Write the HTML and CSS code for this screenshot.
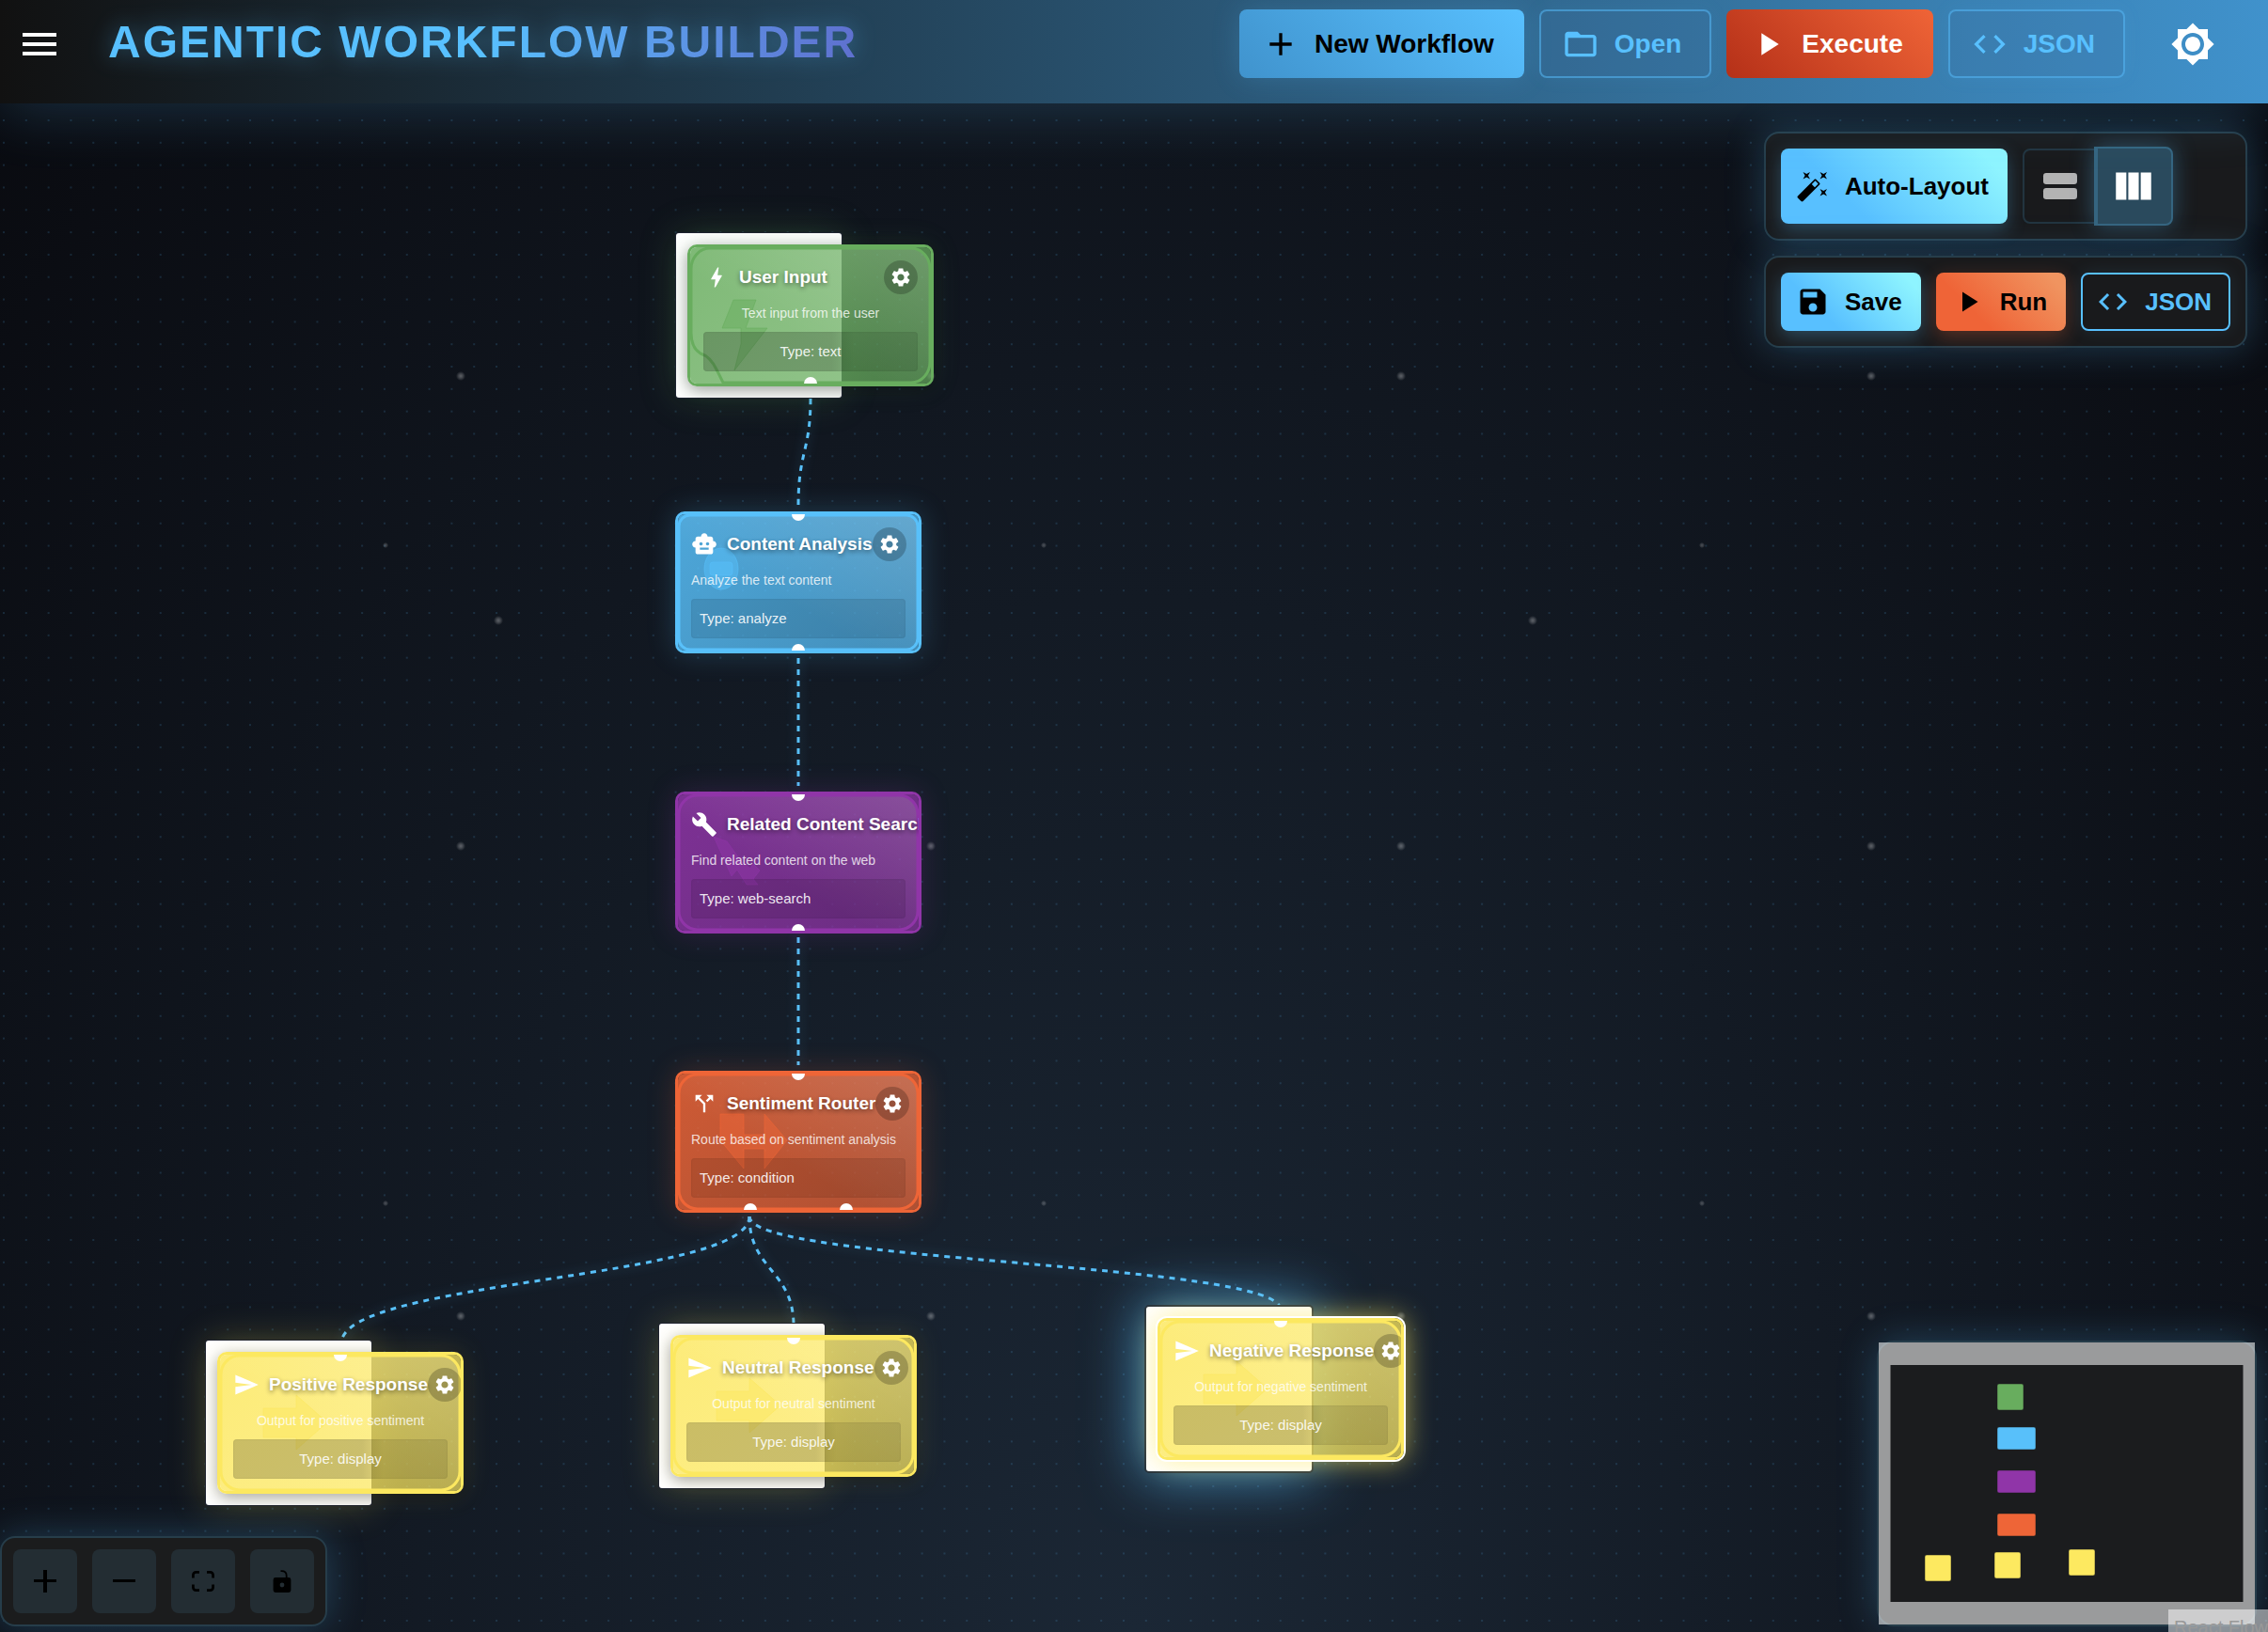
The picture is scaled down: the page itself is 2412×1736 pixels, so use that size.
FILE: index.html
```html
<!DOCTYPE html>
<html lang="en">
<head>
<meta charset="utf-8">
<title>Agentic Workflow Builder</title>
<link rel="stylesheet" href="styles.css">
</head>
<body>
<svg class="sprite" aria-hidden="true">
  <symbol id="i-menu" viewBox="0 0 24 24"><path d="M3 18h18v-2H3v2zm0-5h18v-2H3v2zm0-7v2h18V6H3z"/></symbol>
  <symbol id="i-add" viewBox="0 0 24 24"><path d="M19 13h-6v6h-2v-6H5v-2h6V5h2v6h6v2z"/></symbol>
  <symbol id="i-folder" viewBox="0 0 24 24"><path d="M20 6h-8l-2-2H4c-1.1 0-1.99.9-1.99 2L2 18c0 1.1.9 2 2 2h16c1.1 0 2-.9 2-2V8c0-1.1-.9-2-2-2zm0 12H4V8h16v10z"/></symbol>
  <symbol id="i-play" viewBox="0 0 24 24"><path d="M8 5v14l11-7z"/></symbol>
  <symbol id="i-code" viewBox="0 0 24 24"><path d="M9.4 16.6 4.8 12l4.6-4.6L8 6l-6 6 6 6 1.4-1.4zm5.2 0 4.6-4.6-4.6-4.6L16 6l6 6-6 6-1.4-1.4z"/></symbol>
  <symbol id="i-sun" viewBox="0 0 24 24"><path d="M20 8.69V4h-4.69L12 .69 8.69 4H4v4.69L.69 12 4 15.31V20h4.69L12 23.31 15.31 20H20v-4.69L23.31 12 20 8.69zM12 18c-3.31 0-6-2.69-6-6s2.69-6 6-6 6 2.69 6 6-2.69 6-6 6zm0-10c-2.21 0-4 1.79-4 4s1.79 4 4 4 4-1.79 4-4-1.79-4-4-4z"/></symbol>
  <symbol id="i-wand" viewBox="0 0 24 24"><path d="M7.5 5.6 10 7 8.6 4.5 10 2 7.5 3.4 5 2l1.4 2.5L5 7zm12 9.8L17 14l1.4 2.5L17 19l2.5-1.4L22 19l-1.4-2.5L22 14zM22 2l-2.5 1.4L17 2l1.4 2.5L17 7l2.5-1.4L22 7l-1.4-2.5zm-7.63 5.29c-.39-.39-1.02-.39-1.41 0L1.29 18.96c-.39.39-.39 1.02 0 1.41l2.34 2.34c.39.39 1.02.39 1.41 0L16.7 11.05c.39-.39.39-1.02 0-1.41l-2.33-2.35zm-1.03 5.49-2.12-2.12 2.44-2.44 2.12 2.12-2.44 2.44z"/></symbol>
  <symbol id="i-rows" viewBox="0 0 24 24"><rect x="3" y="5" width="18" height="6" rx="1.6"/><rect x="3" y="13" width="18" height="6" rx="1.6"/></symbol>
  <symbol id="i-columns" viewBox="0 0 24 24"><path d="M3 5h5.33v14H3zM9.33 5h5.33v14H9.33zM15.67 5H21v14h-5.33z"/></symbol>
  <symbol id="i-save" viewBox="0 0 24 24"><path d="M17 3H5c-1.11 0-2 .9-2 2v14c0 1.1.89 2 2 2h14c1.1 0 2-.9 2-2V7l-4-4zm-5 16c-1.66 0-3-1.34-3-3s1.34-3 3-3 3 1.34 3 3-1.34 3-3 3zm3-10H5V5h10v4z"/></symbol>
  <symbol id="i-bolt" viewBox="0 0 24 24"><path d="M11 21h-1l1-7H7.5c-.58 0-.57-.32-.38-.66.19-.34.05-.08.07-.12C8.48 10.94 10.42 7.54 13 3h1l-1 7h3.5c.49 0 .56.33.47.51l-.07.15C12.96 17.55 11 21 11 21z"/></symbol>
  <symbol id="i-robot" viewBox="0 0 24 24"><path d="M20 9V7c0-1.1-.9-2-2-2h-3c0-1.66-1.34-3-3-3S9 3.34 9 5H6c-1.1 0-2 .9-2 2v2c-1.66 0-3 1.34-3 3s1.34 3 3 3v4c0 1.1.9 2 2 2h12c1.1 0 2-.9 2-2v-4c1.66 0 3-1.34 3-3s-1.34-3-3-3zM7.5 11.5c0-.83.67-1.5 1.5-1.5s1.5.67 1.5 1.5S9.83 13 9 13s-1.5-.67-1.5-1.5zM16 17H8v-2h8v2zm-1-4c-.83 0-1.5-.67-1.5-1.5S14.17 10 15 10s1.5.67 1.5 1.5S15.83 13 15 13z"/></symbol>
  <symbol id="i-wrench" viewBox="0 0 24 24"><path d="m22.7 19-9.1-9.1c.9-2.3.4-5-1.5-6.9-2-2-5-2.4-7.4-1.3L9 6 6 9 1.6 4.7C.4 7.1.9 10.1 2.9 12.1c1.9 1.9 4.6 2.4 6.9 1.5l9.1 9.1c.4.4 1 .4 1.4 0l2.3-2.3c.5-.4.5-1.1.1-1.4z"/></symbol>
  <symbol id="i-split" viewBox="0 0 24 24"><path d="m14 4 2.29 2.29-2.88 2.88 1.42 1.42 2.88-2.88L20 10V4zm-4 0H4v6l2.29-2.29 4.71 4.7V20h2v-8.41l-5.29-5.3z"/></symbol>
  <symbol id="i-send" viewBox="0 0 24 24"><path d="M2.01 21 23 12 2.01 3 2 10l15 2-15 2z"/></symbol>
  <symbol id="i-gear" viewBox="0 0 24 24"><path d="M19.14 12.94c.04-.3.06-.61.06-.94 0-.32-.02-.64-.07-.94l2.03-1.58c.18-.14.23-.41.12-.61l-1.92-3.32c-.12-.22-.37-.29-.59-.22l-2.39.96c-.5-.38-1.03-.7-1.62-.94l-.36-2.54c-.04-.24-.24-.41-.48-.41h-3.84c-.24 0-.43.17-.47.41l-.36 2.54c-.59.24-1.13.57-1.62.94l-2.39-.96c-.22-.08-.47 0-.59.22L2.74 8.87c-.12.21-.08.47.12.61l2.03 1.58c-.05.3-.09.63-.09.94s.02.64.07.94l-2.03 1.58c-.18.14-.23.41-.12.61l1.92 3.32c.12.22.37.29.59.22l2.39-.96c.5.38 1.03.7 1.62.94l.36 2.54c.05.24.24.41.48.41h3.84c.24 0 .44-.17.47-.41l.36-2.54c.59-.24 1.13-.56 1.62-.94l2.39.96c.22.08.47 0 .59-.22l1.92-3.32c.12-.22.07-.47-.12-.61l-2.01-1.58zM12 15.6c-1.98 0-3.6-1.62-3.6-3.6s1.62-3.6 3.6-3.6 3.6 1.62 3.6 3.6-1.62 3.6-3.6 3.6z"/></symbol>
  <symbol id="i-zoom-in" viewBox="0 0 24 24"><path d="M10 0h4v10h10v3H14v11h-4V13H0v-3h10z"/></symbol>
  <symbol id="i-zoom-out" viewBox="0 0 24 24"><path d="M0 10h24v3H0z"/></symbol>
  <symbol id="i-fit" viewBox="0 0 24 24"><path fill="none" stroke="currentColor" stroke-width="2.8" d="M1.4 8.5V5.4a3 3 0 0 1 3-3H8M16 2.4h3.6a3 3 0 0 1 3 3v3.1M22.6 15.5v3.1a3 3 0 0 1-3 3H16M8 21.6H4.4a3 3 0 0 1-3-3v-3.1"/></symbol>
  <symbol id="i-lock" viewBox="0 0 24 24"><path fill-rule="evenodd" d="M5 8h14a2.4 2.4 0 0 1 2.4 2.4v11.2A2.4 2.4 0 0 1 19 24H5a2.4 2.4 0 0 1-2.4-2.4V10.4A2.4 2.4 0 0 1 5 8zm7 5.6a2.4 2.4 0 1 0 0 4.8 2.4 2.4 0 0 0 0-4.8z"/><path fill="none" stroke="currentColor" stroke-width="1.8" d="M10.5 1.2h1c3.2 0 5.2 2 5.2 5V8.5"/></symbol>
  <linearGradient id="sheen" x1="0" y1="1" x2="1" y2="0"><stop offset=".4" stop-color="#fff" stop-opacity="0"/><stop offset="1" stop-color="#fff" stop-opacity=".16"/></linearGradient>
</svg>

<header class="topbar">
  <button class="icon-btn" aria-label="Menu"><svg><use href="#i-menu"/></svg></button>
  <h1 class="brand">AGENTIC WORKFLOW BUILDER</h1>
  <nav class="actions">
    <button class="btn btn-new"><svg><use href="#i-add"/></svg>New Workflow</button>
    <button class="btn btn-ghost"><svg><use href="#i-folder"/></svg>Open</button>
    <button class="btn btn-exec"><svg><use href="#i-play"/></svg>Execute</button>
    <button class="btn btn-ghost"><svg><use href="#i-code"/></svg>JSON</button>
  </nav>
  <button class="icon-btn" aria-label="Toggle theme"><svg><use href="#i-sun"/></svg></button>
</header>

<main class="canvas">
  <svg class="layer" aria-hidden="true">
    <defs><pattern id="grid" x="3" y="17" width="23.82" height="23.82" patternUnits="userSpaceOnUse"><circle cx="1" cy="1" r="1"/></pattern></defs>
    <rect class="grid-fill" width="100%" height="100%" fill="url(#grid)"/>
    <g class="edges">
      <path d="M862 314C862 370 849 370 849 428"/>
      <path d="M849 590V726"/>
      <path d="M849 887V1023"/>
      <path d="M797 1184C797 1251 363 1251 363 1319"/>
      <path d="M797 1184C797 1241 844 1241 844 1300"/>
      <path d="M797 1184C797 1233 1362 1233 1362 1283"/>
    </g>
  </svg>

  <article class="node boxed green n-input">
    <div class="card">
      <svg class="decor" viewBox="3 3 256 145"><path class="ring" d="M24 4H238a20 22 0 0 1 20 22V125a20 22 0 0 1-20 22H38L31 133 Q24 119 14 116 4 110 4 94V26A20 22 0 0 1 24 4z"/><path class="shape" d="M49 59h24L62 89h23L50 134l7-28V89H37z"/></svg>
      <div class="head"><svg class="glyph"><use href="#i-bolt"/></svg><h2>User Input</h2><button class="gear" aria-label="Settings"><svg><use href="#i-gear"/></svg></button></div>
      <p class="desc">Text input from the user</p>
      <p class="type">Type: text</p>
      <i class="port out"></i>
    </div>
  </article>

  <article class="node blue n-analysis">
    <div class="card">
      <svg class="decor" viewBox="3 3 256 145"><rect class="ring" x="4" y="4" width="254" height="143" rx="12"/><ellipse class="shape" cx="49" cy="61" rx="18" ry="22"/><rect class="shape" x="37" y="54" width="24" height="14" rx="3"/></svg>
      <div class="head"><svg class="glyph"><use href="#i-robot"/></svg><h2>Content Analysis</h2><button class="gear" aria-label="Settings"><svg><use href="#i-gear"/></svg></button></div>
      <p class="desc">Analyze the text content</p>
      <p class="type">Type: analyze</p>
      <i class="port in"></i><i class="port out"></i>
    </div>
  </article>

  <article class="node purple n-search">
    <div class="card">
      <svg class="decor" viewBox="3 3 256 145"><rect class="ring" x="4" y="4" width="254" height="143" rx="20"/><path class="shape" d="M41 48l14 5 16 22 9 7 3-5 7 7-7 9 5 6H76L66 83l-6 7z"/></svg>
      <div class="head"><svg class="glyph"><use href="#i-wrench"/></svg><h2>Related Content Search</h2></div>
      <p class="desc">Find related content on the web</p>
      <p class="type">Type: web-search</p>
      <i class="port in"></i><i class="port out"></i>
    </div>
  </article>

  <article class="node orange n-router">
    <div class="card">
      <svg class="decor" viewBox="3 3 256 145"><rect class="ring" x="4" y="4" width="254" height="143" rx="20"/><path class="shape" d="M48 46h25v22h22V46l24 28-24 30V83H73v21L48 74z"/></svg>
      <div class="head"><svg class="glyph"><use href="#i-split"/></svg><h2>Sentiment Router</h2><button class="gear" aria-label="Settings"><svg><use href="#i-gear"/></svg></button></div>
      <p class="desc">Route based on sentiment analysis</p>
      <p class="type">Type: condition</p>
      <i class="port in"></i><i class="port out yes"></i><i class="port out no"></i>
    </div>
  </article>

  <article class="node boxed yellow n-positive">
    <div class="card">
      <svg class="decor" viewBox="3 3 256 145"><rect class="ring" x="4" y="4" width="254" height="143" rx="20"/><path class="shape" d="M49 60h35V46l33 29-33 29V91H49z"/></svg>
      <div class="head"><svg class="glyph"><use href="#i-send"/></svg><h2>Positive Response</h2><button class="gear" aria-label="Settings"><svg><use href="#i-gear"/></svg></button></div>
      <p class="desc">Output for positive sentiment</p>
      <p class="type">Type: display</p>
      <i class="port in"></i>
    </div>
  </article>

  <article class="node boxed yellow n-neutral">
    <div class="card">
      <svg class="decor" viewBox="3 3 256 145"><rect class="ring" x="4" y="4" width="254" height="143" rx="20"/><path class="shape" d="M49 60h35V46l33 29-33 29V91H49z"/></svg>
      <div class="head"><svg class="glyph"><use href="#i-send"/></svg><h2>Neutral Response</h2><button class="gear" aria-label="Settings"><svg><use href="#i-gear"/></svg></button></div>
      <p class="desc">Output for neutral sentiment</p>
      <p class="type">Type: display</p>
      <i class="port in"></i>
    </div>
  </article>

  <article class="node boxed yellow selected n-negative">
    <div class="card">
      <svg class="decor" viewBox="3 3 256 145"><rect class="ring" x="4" y="4" width="254" height="143" rx="20"/><path class="shape" d="M49 60h35V46l33 29-33 29V91H49z"/></svg>
      <div class="head"><svg class="glyph"><use href="#i-send"/></svg><h2>Negative Response</h2><button class="gear" aria-label="Settings"><svg><use href="#i-gear"/></svg></button></div>
      <p class="desc">Output for negative sentiment</p>
      <p class="type">Type: display</p>
      <i class="port in"></i>
    </div>
  </article>

  <aside class="tools">
    <div class="panel">
      <button class="tool tool-sky"><svg><use href="#i-wand"/></svg>Auto-Layout</button>
      <div class="toggle" role="group" aria-label="Layout direction">
        <button aria-label="Vertical" aria-pressed="false"><svg><use href="#i-rows"/></svg></button>
        <button class="on" aria-label="Horizontal" aria-pressed="true"><svg><use href="#i-columns"/></svg></button>
      </div>
    </div>
    <div class="panel">
      <button class="tool tool-sky"><svg><use href="#i-save"/></svg>Save</button>
      <button class="tool tool-run"><svg><use href="#i-play"/></svg>Run</button>
      <button class="tool tool-line"><svg><use href="#i-code"/></svg>JSON</button>
    </div>
  </aside>

  <div class="controls">
    <button aria-label="Zoom in"><svg><use href="#i-zoom-in"/></svg></button>
    <button aria-label="Zoom out"><svg><use href="#i-zoom-out"/></svg></button>
    <button aria-label="Fit view"><svg><use href="#i-fit"/></svg></button>
    <button aria-label="Toggle interactivity"><svg><use href="#i-lock"/></svg></button>
  </div>

  <div class="minimap">
    <svg viewBox="0 0 400 300" role="img" aria-label="Mini map">
      <g stroke="#1b1c1e" stroke-opacity=".5">
        <rect x="126" y="44" width="28" height="28" rx="2" fill="#68ad5e"/>
        <rect x="126" y="90" width="41" height="24" rx="2" fill="#58c0fa"/>
        <rect x="126" y="136" width="41" height="24" rx="2" fill="#9035a8"/>
        <rect x="126" y="182" width="41" height="24" rx="2" fill="#ee6537"/>
        <rect x="49" y="226" width="28" height="28" rx="2" fill="#fde960"/>
        <rect x="123" y="223" width="28" height="28" rx="2" fill="#fde960"/>
        <rect x="202" y="220" width="28" height="28" rx="2" fill="#fde960"/>
      </g>
      <path class="mask" fill-rule="evenodd" d="M0 0h400v300H0zM12.5 24v252h375V24z"/>
    </svg>
  </div>
  <a class="credit" href="https://reactflow.dev">React Flow</a>
</main>
</body>
</html>
```
FILE: styles.css
```css
* { box-sizing: border-box; }

body {
  margin: 0;
  height: 100vh;
  display: flex;
  flex-direction: column;
  overflow: hidden;
  font-family: "Liberation Sans", Arial, sans-serif;
  color: #fff;
  background:
    radial-gradient(circle at 490px 400px, rgb(255 255 255 / .32) 0, rgb(255 255 255 / .22) 2px, transparent 5px) 0 0 / 500px 500px,
    radial-gradient(ellipse at bottom, #1b2735 0%, #090a0f 100%);
  background-color: #090a0f;
}

h1, h2, p { margin: 0; }

button {
  font: inherit;
  color: inherit;
  border: 0;
  margin: 0;
  padding: 0;
  background: none;
  cursor: pointer;
}

svg { display: block; fill: currentColor; }

.sprite { position: absolute; width: 0; height: 0; }

/* Top bar */
.topbar {
  position: relative;
  z-index: 2;
  display: flex;
  align-items: center;
  padding: 10px 56px 27px 18px;
  background: linear-gradient(90deg, #111, #4092cc);
  box-shadow: 0 8px 64px rgb(88 192 255 / .2);
}

.icon-btn svg { width: 48px; height: 48px; }

.brand {
  margin-left: 49px;
  padding-bottom: 4px;
  font-size: 48px;
  line-height: 56px;
  font-weight: 700;
  letter-spacing: 2px;
  color: transparent;
  background: linear-gradient(90deg, #58c0ff 50%, #5f70cf);
  background-clip: text;
  filter: drop-shadow(0 0 12px rgb(88 192 255 / .4));
}

.actions {
  display: flex;
  gap: 16px;
  margin-left: auto;
  margin-right: 48px;
}

.btn {
  display: flex;
  align-items: center;
  gap: 16px;
  height: 73px;
  padding: 0 32px 0 24px;
  border-radius: 8px;
  font-size: 28px;
  font-weight: 700;
}

.btn svg { width: 40px; height: 40px; }

.btn-new {
  color: #000;
  background: linear-gradient(45deg, #4093cd, #58c0ff);
  box-shadow: 0 0 30px rgb(88 192 255 / .2);
}

.btn-exec {
  background: linear-gradient(45deg, #b53018, #ef6437);
}

.btn-ghost {
  color: #58c0ff;
  padding: 0 30px 0 22px;
  border: 2px solid rgb(88 192 255 / .5);
  background: rgb(60 110 160 / .2);
  box-shadow: 0 0 20px rgb(88 192 255 / .08);
}

/* Canvas */
.canvas {
  position: relative;
  flex: 1;
  overflow: hidden;
  background:
    radial-gradient(circle at 410px 470px, rgb(255 255 255 / .25) 0, rgb(255 255 255 / .12) 2px, transparent 3px) 0 0 / 700px 700px,
    radial-gradient(circle at 530px 550px, rgb(255 255 255 / .32) 0, rgb(255 255 255 / .22) 2px, transparent 5px) 0 0 / 1100px 1100px;
}

.layer {
  position: absolute;
  inset: 0;
  width: 100%;
  height: 100%;
}

#grid circle { fill: #58c0ff; opacity: .2; }

.edges {
  fill: none;
  stroke: #58c0fa;
  stroke-width: 3;
  stroke-dasharray: 6 6;
  filter: drop-shadow(0 0 6px rgb(88 192 255 / .4));
}

/* Nodes */
.node { position: absolute; width: 262px; }

.green { --tone: 104 173 94; }
.blue { --tone: 88 192 250; }
.purple { --tone: 144 53 168; }
.orange { --tone: 238 101 55; }
.yellow { --tone: 252 232 96; }

.n-input { left: 719px; top: 138px; }
.n-analysis { left: 718px; top: 434px; }
.n-search { left: 718px; top: 732px; }
.n-router { left: 718px; top: 1029px; }
.n-positive { left: 219px; top: 1316px; }
.n-neutral { left: 701px; top: 1298px; }
.n-negative { left: 1219px; top: 1280px; }

.boxed {
  width: 176px;
  padding: 12px;
  border-radius: 3px;
  background: #fff;
  box-shadow: 0 0 0 1px #1d2130, 0 0 40px rgb(var(--tone) / .22);
  text-align: center;
}

.card {
  position: relative;
  display: flex;
  flex-direction: column;
  gap: 10px;
  width: 262px;
  padding: 14px 14px 13px;
  overflow: hidden;
  border: 3px solid rgb(var(--tone));
  border-radius: 10px;
  background: linear-gradient(135deg, rgb(var(--tone) / .85), rgb(var(--tone) / .7)) padding-box;
  box-shadow: 0 0 30px rgb(var(--tone) / .22);
}

.boxed .card {
  box-shadow: 0 4px 16px rgb(0 0 0 / .35), 0 0 30px rgb(var(--tone) / .15);
}

.selected {
  box-shadow: 0 0 0 2px #24303d, 0 0 60px 4px rgb(88 192 255 / .7);
}

.selected .card {
  box-shadow: 0 0 0 2px #fff, 0 0 30px rgb(var(--tone) / .7);
}

.decor {
  position: absolute;
  inset: 0;
  width: 100%;
  height: 100%;
}

.ring {
  fill: url(#sheen);
  stroke: rgb(var(--tone));
  stroke-width: 3;
}

.shape {
  fill: rgb(var(--tone) / .5);
  stroke: rgb(var(--tone) / .6);
}

.head {
  position: relative;
  display: flex;
  align-items: center;
  height: 36px;
}

.glyph { width: 28px; height: 28px; margin-right: 10px; flex: none; }

.head h2 {
  flex: none;
  font-size: 19px;
  line-height: 24px;
  white-space: nowrap;
  text-shadow: 0 2px 5px rgb(0 0 0 / .45);
}

.gear {
  display: grid;
  place-items: center;
  flex: none;
  width: 36px;
  height: 36px;
  margin-left: auto;
  border-radius: 50%;
  background: rgb(0 0 0 / .22);
}

.gear svg { width: 24px; height: 24px; }

.desc {
  position: relative;
  font-size: 14px;
  line-height: 20px;
  white-space: nowrap;
  color: rgb(255 255 255 / .8);
}

.type {
  position: relative;
  padding: 0 9px;
  font-size: 15px;
  line-height: 42px;
  border-radius: 4px;
  color: rgb(255 255 255 / .9);
  background: rgb(0 0 0 / .1);
  box-shadow: inset 0 0 2px rgb(0 0 0 / .12);
}

.boxed .type {
  background: linear-gradient(90deg, rgb(0 0 0 / .2) 60%, rgb(0 0 0 / .1) 70%);
}

.port {
  position: absolute;
  left: 121px;
  width: 14px;
  height: 14px;
  border-radius: 50%;
  background: #fff;
}

.port.in { top: -7px; }
.port.out { bottom: -7px; }
.port.yes { left: 70px; }
.port.no { left: 172px; }

/* Floating tools */
.tools {
  position: absolute;
  top: 30px;
  right: 22px;
  display: flex;
  flex-direction: column;
  gap: 16px;
}

.panel {
  display: flex;
  gap: 16px;
  padding: 16px;
  border: 2px solid #263d4a;
  border-radius: 16px;
  background: #191a1c;
  box-shadow: 0 0 40px rgb(88 192 255 / .25);
}

.tool {
  display: flex;
  align-items: center;
  gap: 16px;
  min-height: 62px;
  padding: 0 20px 0 16px;
  border-radius: 8px;
  font-size: 26px;
  font-weight: 700;
  color: #000;
}

.tool svg { width: 36px; height: 36px; }

.tool-sky {
  background: linear-gradient(45deg, #58c0ff 30%, #8ef4ff 90%);
  box-shadow: 0 6px 20px rgb(88 192 255 / .3);
}

.tool-run {
  background: linear-gradient(45deg, #ef6437 30%, #f09460 90%);
  box-shadow: 0 6px 20px rgb(238 101 55 / .3);
}

.tool-line {
  padding: 0 18px 0 14px;
  border: 2px solid #58c0ff;
  color: #58c0ff;
  box-shadow: 0 0 20px rgb(88 192 255 / .1);
}

.toggle { display: flex; }

.toggle button {
  display: grid;
  place-items: center;
  width: 80px;
  height: 80px;
  border: 2px solid #22343f;
  border-radius: 8px 0 0 8px;
  color: #b3b3b3;
}

.toggle svg { width: 48px; height: 48px; }

.toggle .on {
  position: relative;
  width: 84px;
  height: 84px;
  margin: -2px 0 -2px -4px;
  padding-right: 2px;
  border-color: #356580;
  border-left-width: 4px;
  border-radius: 0 8px 8px 0;
  background: #2a4a5d;
  color: #fff;
  box-shadow: 0 0 24px rgb(88 192 255 / .35);
}

.toggle .on svg { width: 50px; height: 50px; }

/* Zoom controls */
.controls {
  position: absolute;
  left: 0;
  bottom: 6px;
  display: flex;
  gap: 16px;
  padding: 12px;
  border: 2px solid #263d4a;
  border-radius: 16px;
  background: #1b1c1d;
  box-shadow: 0 0 40px rgb(88 192 255 / .25);
}

.controls button {
  display: grid;
  place-items: center;
  width: 68px;
  height: 68px;
  border-radius: 8px;
  background: #232d33;
  color: #000;
}

.controls svg { width: 24px; height: 24px; }

/* Mini map */
.minimap {
  position: absolute;
  right: 12px;
  bottom: 6px;
  width: 404px;
  height: 304px;
  border: 2px solid #263d4a;
  border-radius: 18px;
  background: #1b1c1e;
  box-shadow: 0 0 40px rgb(88 192 255 / .25);
}

.minimap svg { width: 400px; height: 300px; }

.mask { fill: rgb(240 240 240 / .6); stroke: none; }

.credit {
  position: absolute;
  right: -6px;
  bottom: -14px;
  padding: 4px 6px;
  font-size: 20px;
  line-height: 30px;
  color: #999;
  text-decoration: none;
  background: rgb(255 255 255 / .5);
}
```
